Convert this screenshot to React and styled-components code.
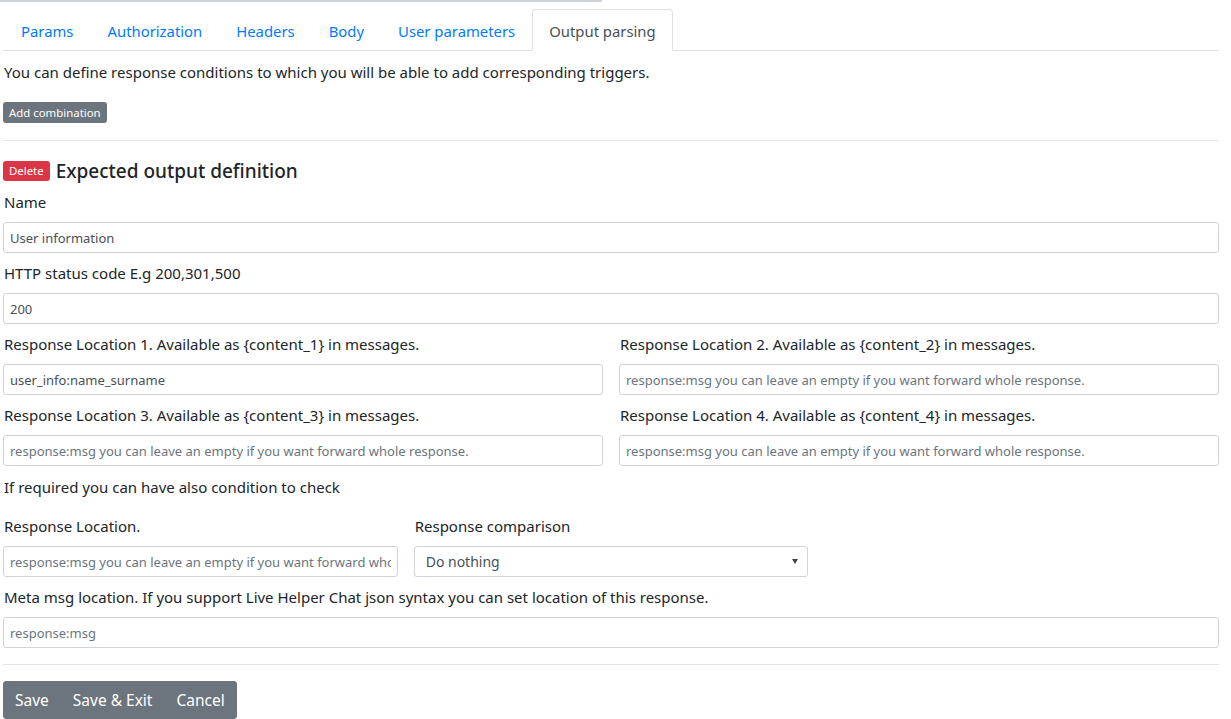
import React from "react";
import styled, { createGlobalStyle } from "styled-components";

const Global = createGlobalStyle`
  html, body { margin: 0; padding: 0; background: #fff; }
  body {
    font-family: "Noto Sans", "Open Sans", sans-serif;
    font-size: 14px;
    color: #212529;
  }
  * { box-sizing: border-box; }
`;

const Page = styled.div`
  padding: 0 12px 0 3px;
  width: 1231px;
  height: 719px;
  overflow: hidden;
`;

const TopRule = styled.div`
  width: 602px;
  height: 2px;
  background: #cfd3d7;
  margin-left: -3px;
  margin-bottom: 7px;
`;

const Tabs = styled.ul`
  display: flex;
  list-style: none;
  margin: 0;
  padding: 0;
  border-bottom: 1px solid #dee2e6;
`;

const Tab = styled.li`
  margin-bottom: -1px;
  padding: 9px 16px 7px;
  line-height: 24px;
  font-size: 14.85px;
  border: 1px solid ${(p) => (p.$active ? "#dee2e6" : "transparent")};
  border-bottom-color: ${(p) => (p.$active ? "#fff" : "transparent")};
  border-radius: 4px 4px 0 0;
  background: ${(p) => (p.$active ? "#fff" : "transparent")};
  color: ${(p) => (p.$active ? "#495057" : "#007bff")};
  margin-left: ${(p) => (p.$first ? "1px" : "0")};
`;

const Intro = styled.p`
  margin: 10px 0 19px 1px;
  line-height: 22px;
  font-size: 15px;
`;

const SmallButton = styled.button`
  font-family: inherit;
  font-size: 11.4px;
  height: ${(p) => p.$h}px;
  padding: 0 6px;
  line-height: ${(p) => p.$h}px;
  border: none;
  border-radius: 3px;
  background: ${(p) => p.$bg};
  color: #fff;
  display: inline-block;
`;

const Rule = styled.hr`
  border: 0;
  border-top: 1px solid #e3e5e8;
  margin: ${(p) => p.$m};
`;

const HeadingRow = styled.div`
  display: flex;
  align-items: center;
  gap: 6px;
  margin-bottom: 8px;
  height: 24px;
`;

const Heading = styled.h4`
  margin: 0;
  font-size: 19px;
  font-weight: 500;
  line-height: 24px;
  color: #212529;
`;

const Group = styled.div`
  margin-bottom: 9px;
`;

const Label = styled.label`
  display: block;
  font-size: 15px;
  line-height: 22px;
  margin-bottom: 9px;
  padding-left: 1px;
  white-space: nowrap;
`;

const Input = styled.input`
  display: block;
  width: 100%;
  height: 31px;
  padding: 0 6px;
  font-family: inherit;
  font-size: 13px;
  color: #495057;
  background: #fff;
  border: 1px solid #ced4da;
  border-radius: 3px;
  outline: none;
  &::placeholder { color: #6c757d; opacity: 1; }
`;

const Grid = styled.div`
  display: grid;
  grid-template-columns: repeat(${(p) => p.$cols}, 1fr);
  column-gap: 16px;
`;

const SelectWrap = styled.div`
  position: relative;
`;

const Select = styled.select`
  display: block;
  width: 100%;
  height: 31px;
  padding: 0 11px;
  font-family: inherit;
  font-size: 14px;
  color: #495057;
  background: #fff;
  border: 1px solid #ced4da;
  border-radius: 3px;
  appearance: none;
  -webkit-appearance: none;
  outline: none;
`;

const Arrow = styled.svg`
  position: absolute;
  right: 10px;
  top: 13px;
  pointer-events: none;
`;

const Note = styled.p`
  margin: 1px 0 17px 1px;
  line-height: 22px;
  font-size: 15px;
`;

const BtnGroup = styled.div`
  display: inline-flex;
  border-radius: 4px;
  overflow: hidden;
  background: #6c757d;
`;

const GroupBtn = styled.button`
  font-family: inherit;
  font-size: 15.5px;
  line-height: 24px;
  padding: 7px 12px;
  background: #6c757d;
  color: #fff;
  border: none;
`;

export default function App() {
  const ph = "response:msg you can leave an empty if you want forward whole response.";
  return (
    <Page>
      <Global />
      <TopRule />
      <Tabs>
        <Tab $first>Params</Tab>
        <Tab>Authorization</Tab>
        <Tab>Headers</Tab>
        <Tab>Body</Tab>
        <Tab>User parameters</Tab>
        <Tab $active>Output parsing</Tab>
      </Tabs>
      <Intro>You can define response conditions to which you will be able to add corresponding triggers.</Intro>
      <SmallButton $bg="#6c757d" $h={21}>Add combination</SmallButton>
      <Rule $m="17px 0 18px" />
      <HeadingRow>
        <SmallButton $bg="#dc3545" $h={20}>Delete</SmallButton>
        <Heading>Expected output definition</Heading>
      </HeadingRow>
      <Group>
        <Label>Name</Label>
        <Input defaultValue="User information" />
      </Group>
      <Group>
        <Label>HTTP status code E.g 200,301,500</Label>
        <Input defaultValue="200" />
      </Group>
      <Grid $cols={2}>
        <Group>
          <Label>Response Location 1. Available as {"{content_1}"} in messages.</Label>
          <Input defaultValue="user_info:name_surname" />
        </Group>
        <Group>
          <Label>Response Location 2. Available as {"{content_2}"} in messages.</Label>
          <Input placeholder={ph} />
        </Group>
        <Group>
          <Label>Response Location 3. Available as {"{content_3}"} in messages.</Label>
          <Input placeholder={ph} />
        </Group>
        <Group>
          <Label>Response Location 4. Available as {"{content_4}"} in messages.</Label>
          <Input placeholder={ph} />
        </Group>
      </Grid>
      <Note>If required you can have also condition to check</Note>
      <Grid $cols={3}>
        <Group>
          <Label>Response Location.</Label>
          <Input placeholder={ph} />
        </Group>
        <Group>
          <Label>Response comparison</Label>
          <SelectWrap>
            <Select defaultValue="nothing">
              <option value="nothing">Do nothing</option>
            </Select>
            <Arrow width="6" height="5" viewBox="0 0 6 5">
              <path d="M0 0 H6 L3 5 Z" fill="#444" />
            </Arrow>
          </SelectWrap>
        </Group>
      </Grid>
      <Group>
        <Label>Meta msg location. If you support Live Helper Chat json syntax you can set location of this response.</Label>
        <Input placeholder="response:msg" />
      </Group>
      <Rule $m="16px 0 16px" />
      <BtnGroup>
        <GroupBtn>Save</GroupBtn>
        <GroupBtn>Save &amp; Exit</GroupBtn>
        <GroupBtn>Cancel</GroupBtn>
      </BtnGroup>
    </Page>
  );
}
